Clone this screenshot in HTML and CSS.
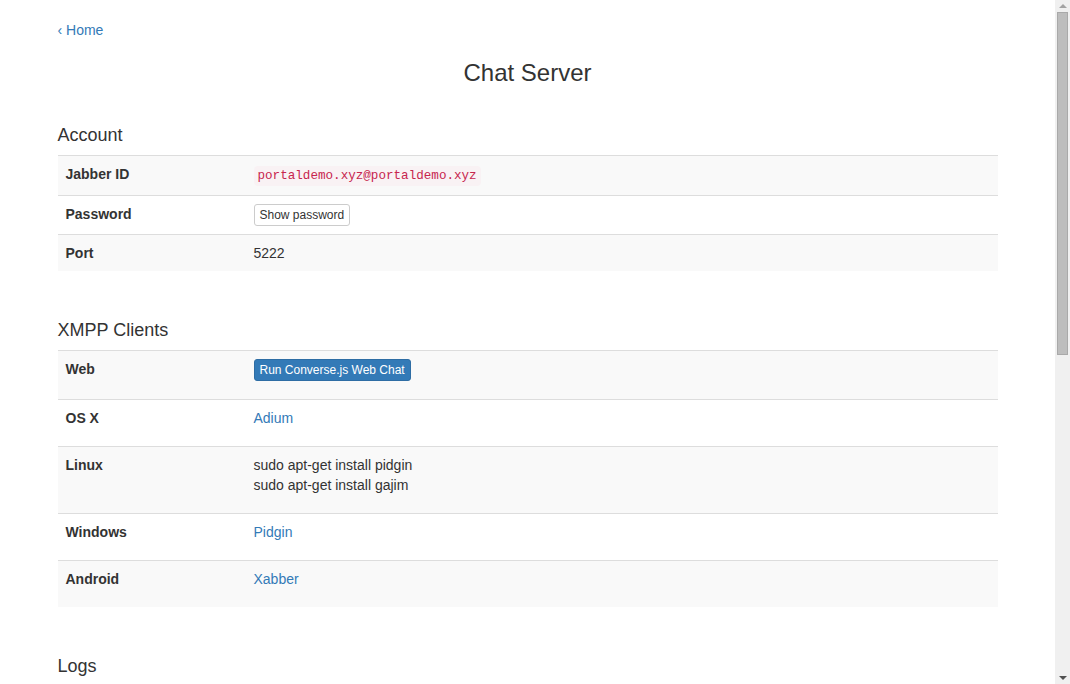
FILE: index.html
```html
<!DOCTYPE html>
<html lang="en">
<head>
<meta charset="utf-8">
<title>Chat Server</title>
<link rel="stylesheet" href="styles.css">
</head>
<body>
<div class="page">
  <div class="container">
    <p class="back"><a href="#">‹ Home</a></p>
    <h1 class="title">Chat Server</h1>

    <h4 class="section-title">Account</h4>
    <table class="table">
      <tr class="odd">
        <th>Jabber ID</th>
        <td><code>portaldemo.xyz@portaldemo.xyz</code></td>
      </tr>
      <tr>
        <th>Password</th>
        <td><button class="btn btn-default">Show password</button></td>
      </tr>
      <tr class="odd">
        <th>Port</th>
        <td>5222</td>
      </tr>
    </table>

    <h4 class="section-title">XMPP Clients</h4>
    <table class="table clients">
      <tr class="odd">
        <th>Web</th>
        <td><p><button class="btn btn-primary">Run Converse.js Web Chat</button></p></td>
      </tr>
      <tr>
        <th>OS X</th>
        <td><p><a href="#">Adium</a></p></td>
      </tr>
      <tr class="odd">
        <th>Linux</th>
        <td><p>sudo apt-get install pidgin<br>sudo apt-get install gajim</p></td>
      </tr>
      <tr>
        <th>Windows</th>
        <td><p><a href="#">Pidgin</a></p></td>
      </tr>
      <tr class="odd">
        <th>Android</th>
        <td><p><a href="#">Xabber</a></p></td>
      </tr>
    </table>

    <h4 class="section-title">Logs</h4>
    <table class="table">
      <tr class="odd">
        <th>Server log</th>
        <td><a href="#">ejabberd.log</a></td>
      </tr>
      <tr>
        <th>Error log</th>
        <td><a href="#">error.log</a></td>
      </tr>
      <tr class="odd">
        <th>Crash log</th>
        <td><a href="#">crash.log</a></td>
      </tr>
    </table>
  </div>
</div>
<div class="scrollbar" aria-hidden="true">
  <div class="sb-btn"><span class="arrow-up"></span></div>
  <div class="sb-thumb"></div>
  <div class="sb-track"></div>
  <div class="sb-btn"><span class="arrow-down"></span></div>
</div>
</body>
</html>
```

FILE: styles.css
```css
html, body {
  margin: 0;
  padding: 0;
  height: 100%;
}

body {
  display: flex;
  overflow: hidden;
  font-family: "Liberation Sans", Arial, sans-serif;
  font-size: 14px;
  line-height: 20px;
  color: #333;
  background: #fff;
}

.page {
  flex: 1;
  height: 100%;
  overflow-y: auto;
  scrollbar-width: none;
}

.page::-webkit-scrollbar {
  display: none;
}

a {
  color: #337ab7;
  text-decoration: none;
}

.container {
  width: 940px;
  margin: 0 auto;
  padding: 20px 15px 520px;
  display: flex;
  flex-direction: column;
}

.back {
  margin: 0;
}

.title {
  font-size: 24px;
  font-weight: normal;
  line-height: 26.4px;
  text-align: center;
  margin: 20px 0 10px;
}

.section-title {
  font-size: 18px;
  font-weight: normal;
  line-height: 18px;
  margin: 30px 0 11px;
}

.table {
  width: 100%;
  border-collapse: collapse;
  border-spacing: 0;
  margin-bottom: 20px;
}

.table th,
.table td {
  padding: 8px;
  border-top: 1px solid #ddd;
  vertical-align: top;
  text-align: left;
  line-height: 20px;
}

.table th {
  width: 20%;
  font-weight: bold;
}

.table tr.odd {
  background: #f9f9f9;
}

.clients p {
  margin: 0 0 10px;
}

code {
  font-family: "Liberation Mono", "Courier New", monospace;
  font-size: 90%;
  line-height: 22px;
  color: #c7254e;
  background: #f9f2f4;
  padding: 3px 4px;
  border-radius: 4px;
}

.btn {
  display: inline-block;
  font-family: "Liberation Sans", Arial, sans-serif;
  font-size: 12px;
  line-height: 18px;
  padding: 1px 5px;
  border: 1px solid #ccc;
  border-radius: 3px;
  vertical-align: top;
  cursor: pointer;
}

.btn-default {
  background: #fff;
  color: #333;
}

.btn-primary {
  background: #337ab7;
  border-color: #2e6da4;
  color: #fff;
}

/* fake browser scrollbar */
.scrollbar {
  width: 15px;
  flex: none;
  height: 100%;
  background: #f0f0f0;
  display: flex;
  flex-direction: column;
  align-items: center;
}

.sb-btn {
  height: 12px;
  width: 15px;
  display: flex;
  align-items: center;
  justify-content: center;
  flex: none;
}

.arrow-up {
  width: 0;
  height: 0;
  border-left: 4px solid transparent;
  border-right: 4px solid transparent;
  border-bottom: 4px solid #a3a3a3;
}

.arrow-down {
  width: 0;
  height: 0;
  border-left: 4px solid transparent;
  border-right: 4px solid transparent;
  border-top: 4px solid #505050;
}

.sb-thumb {
  width: 9px;
  height: 341px;
  flex: none;
  background: #bdbdbd;
  border: 1px solid #a9a9a9;
}

.sb-track {
  flex: 1;
}
```
